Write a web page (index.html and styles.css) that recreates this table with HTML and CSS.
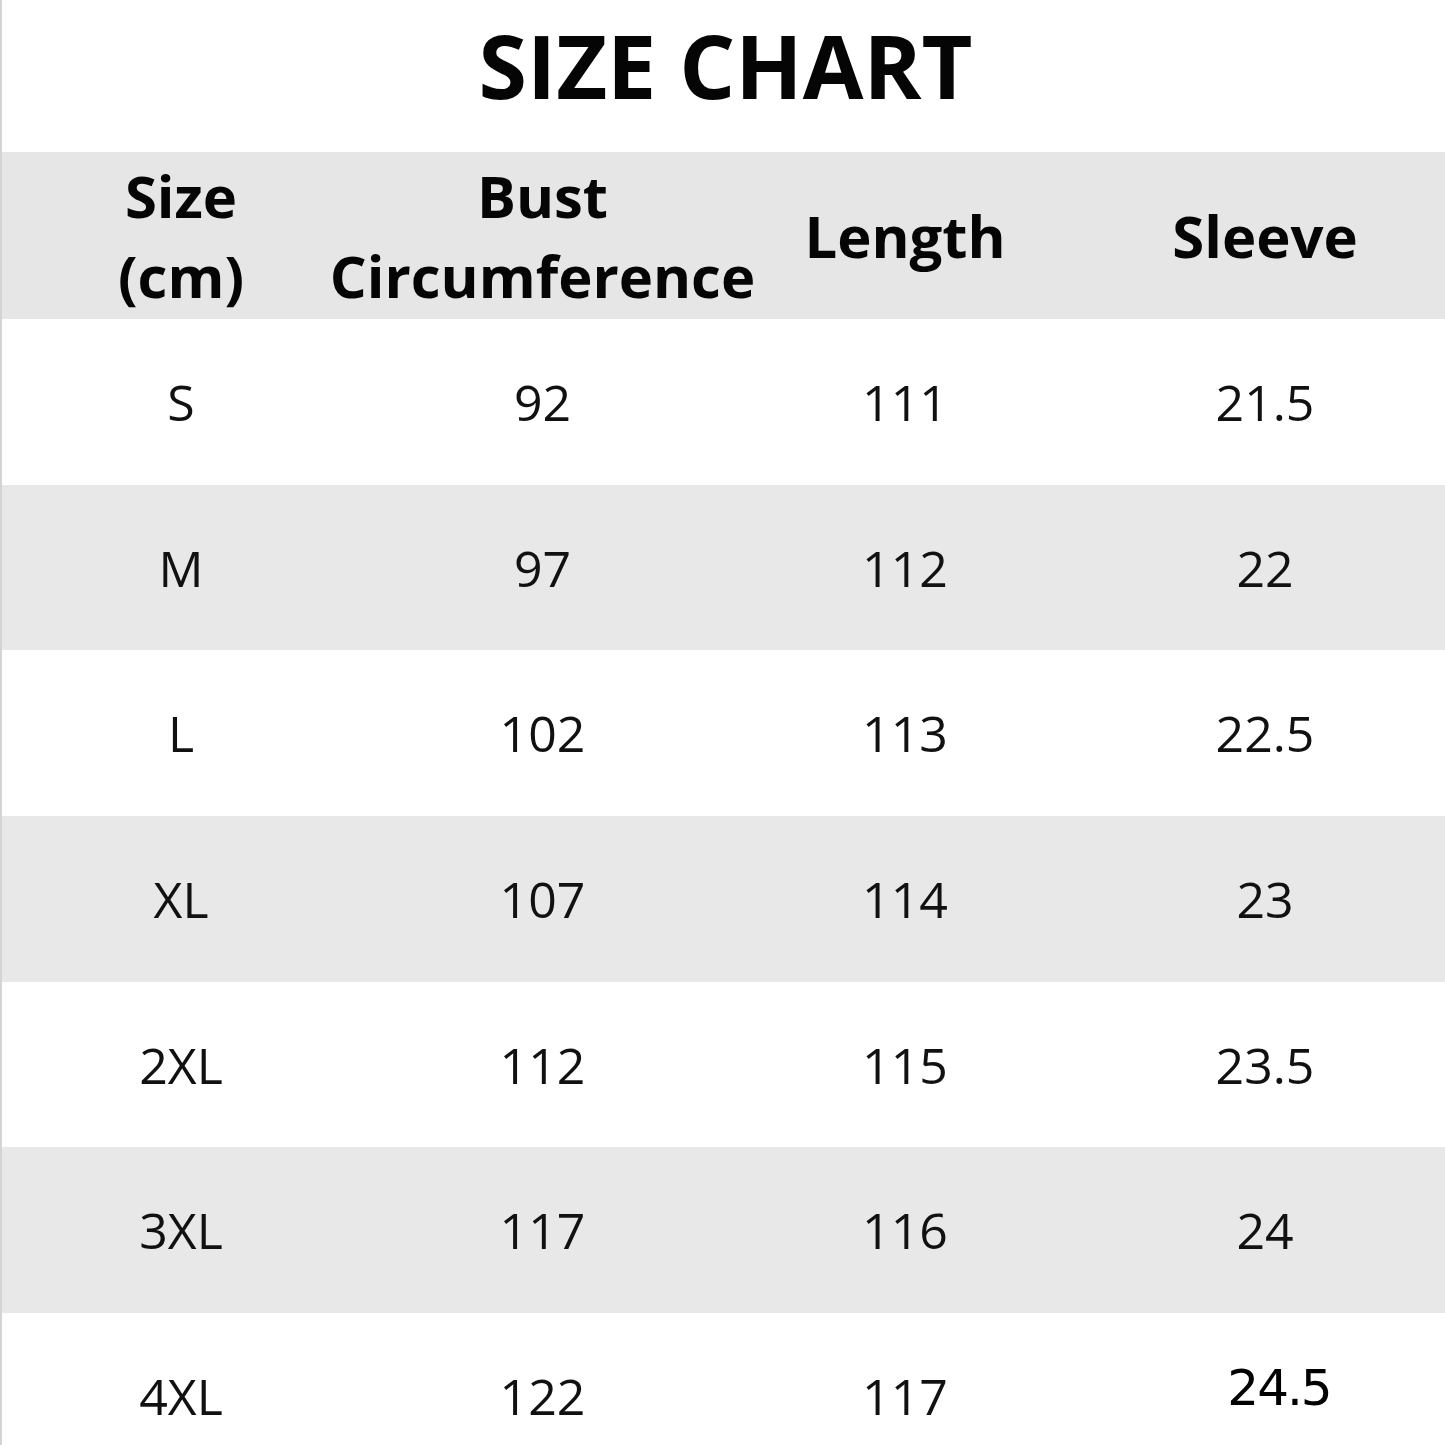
FILE: index.html
```html
<!DOCTYPE html>
<html lang="en">
<head>
<meta charset="utf-8">
<title>Size Chart</title>
<link rel="stylesheet" href="styles.css">
</head>
<body>
<main class="chart">
  <h1 class="title">SIZE CHART</h1>
  <div class="table">
    <div class="row head">
      <div class="cell"><span>Size</span><span>(cm)</span></div>
      <div class="cell"><span>Bust</span><span>Circumference</span></div>
      <div class="cell"><span>Length</span></div>
      <div class="cell"><span>Sleeve</span></div>
    </div>
    <div class="row light">
      <div class="cell">S</div><div class="cell">92</div><div class="cell">111</div><div class="cell">21.5</div>
    </div>
    <div class="row shade">
      <div class="cell">M</div><div class="cell">97</div><div class="cell">112</div><div class="cell">22</div>
    </div>
    <div class="row light">
      <div class="cell">L</div><div class="cell">102</div><div class="cell">113</div><div class="cell">22.5</div>
    </div>
    <div class="row shade">
      <div class="cell">XL</div><div class="cell">107</div><div class="cell">114</div><div class="cell">23</div>
    </div>
    <div class="row light">
      <div class="cell">2XL</div><div class="cell">112</div><div class="cell">115</div><div class="cell">23.5</div>
    </div>
    <div class="row shade">
      <div class="cell">3XL</div><div class="cell">117</div><div class="cell">116</div><div class="cell">24</div>
    </div>
    <div class="row light last">
      <div class="cell">4XL</div><div class="cell">122</div><div class="cell">117</div><div class="cell"><span class="patch">24.5</span></div>
    </div>
  </div>
</main>
</body>
</html>
```
FILE: styles.css
```css
html, body {
  margin: 0;
  padding: 0;
  background: #ffffff;
}
body {
  font-family: "Open Sans", "DejaVu Sans", sans-serif;
  color: #111;
}
.chart {
  width: 1445px;
  height: 1445px;
  overflow: hidden;
  border-left: 2px solid #d4d4d4;
  box-sizing: border-box;
}
.title {
  margin: 0;
  height: 152px;
  display: flex;
  align-items: center;
  justify-content: center;
  font-size: 88px;
  font-weight: 700;
  letter-spacing: 0;
  color: #050505;
  padding-bottom: 22px;
  padding-left: 4px;
  box-sizing: border-box;
}
.table {
  display: flex;
  flex-direction: column;
}
.row {
  display: grid;
  grid-template-columns: 358px 365px 360px 360px;
  height: 165.7px;
  align-items: center;
}
.head {
  height: 167px;
  background: #e6e6e6;
  font-weight: 700;
  line-height: 80px;
  color: #050505;
}
.shade { background: #e8e8e8; }
.light { background: #ffffff; }
.cell {
  text-align: center;
  font-size: 50px;
}
.head .cell {
  font-size: 58px;
  letter-spacing: 0;
  display: flex;
  flex-direction: column;
  align-items: center;
  white-space: nowrap;
  padding-top: 0;
}
.patch {
  display: inline-block;
  position: relative;
  left: 14px;
  top: -10px;
  padding: 0 40px;
  font-family: "DejaVu Sans", sans-serif;
  font-size: 50px;
  letter-spacing: -2px;
  color: #000;
  background: #fff;
  box-shadow: 0 0 30px 20px rgba(255,255,255,0.9);
}
```
